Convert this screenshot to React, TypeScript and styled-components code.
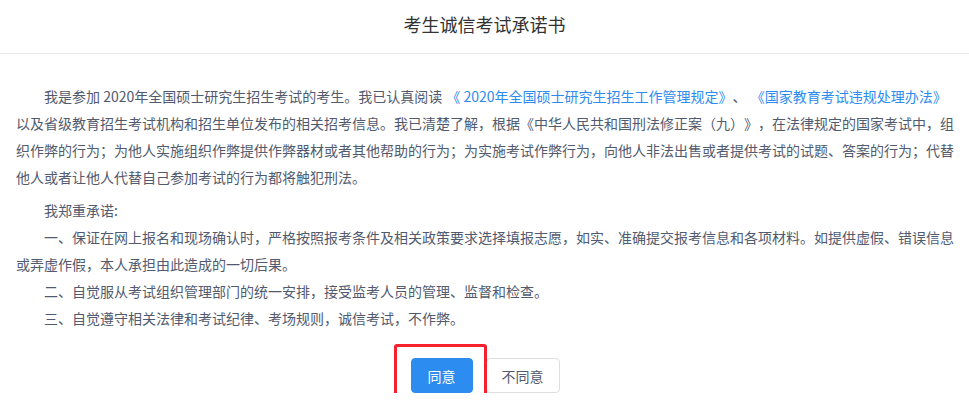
import * as React from "react";
import styled, { createGlobalStyle } from "styled-components";

const GlobalStyle = createGlobalStyle`
  html, body {
    margin: 0;
    padding: 0;
    background: #fff;
  }
  body {
    font-family: "Noto Sans CJK SC", "Liberation Sans", sans-serif;
    -webkit-font-smoothing: antialiased;
  }
`;

const Page = styled.div`
  width: 969px;
  background: #fff;
`;

const Header = styled.header`
  padding: 14px 0 19px;
  border-bottom: 1px solid #e8eaec;
  text-align: center;
`;

const Title = styled.h1`
  margin: 0;
  font-size: 18px;
  line-height: 20px;
  font-weight: 400;
  color: #333;
`;

const Body = styled.section`
  padding: 29px 15px 0 16px;
  font-size: 14px;
  line-height: 27px;
  color: #515a6e;
  text-spacing-trim: space-all;
`;

const Paragraph = styled.p<{ $gap?: number }>`
  margin: ${(p) => p.$gap ?? 0}px 0 0;
  text-indent: 2em;
`;

const Link = styled.a`
  margin-left: 1px;
  color: #2d8cf0;
  text-decoration: none;
  cursor: pointer;
`;

const Actions = styled.div`
  display: flex;
  justify-content: center;
  gap: 13px;
  margin-top: 26px;
`;

const Highlight = styled.div`
  position: relative;

  &::after {
    content: "";
    position: absolute;
    left: -17px;
    right: -14px;
    top: -14px;
    bottom: -12px;
    border: 3px solid #f5222d;
    border-radius: 3px;
    pointer-events: none;
  }
`;

const Button = styled.button<{ $primary?: boolean }>`
  height: 35px;
  padding: 0 ${(p) => (p.$primary ? 16 : 15)}px;
  font-family: inherit;
  font-size: 14px;
  border-radius: 4px;
  border: 1px solid ${(p) => (p.$primary ? "#2d8cf0" : "#dcdee2")};
  background: ${(p) => (p.$primary ? "#2d8cf0" : "#fff")};
  color: ${(p) => (p.$primary ? "#fff" : "#515a6e")};
  cursor: pointer;
`;

export default function App() {
  return (
    <Page>
      <GlobalStyle />
      <Header>
        <Title>考生诚信考试承诺书</Title>
      </Header>
      <Body>
        <Paragraph>
          我是参加 2020年全国硕士研究生招生考试的考生。我已认真阅读{" "}
          <Link>《 2020年全国硕士研究生招生工作管理规定》</Link>、{" "}
          <Link>《国家教育考试违规处理办法》</Link>
          以及省级教育招生考试机构和招生单位发布的相关招考信息。我已清楚了解，根据《中华人民共和国刑法修正案（九）》，在法律规定的国家考试中，组织作弊的行为；为他人实施组织作弊提供作弊器材或者其他帮助的行为；为实施考试作弊行为，向他人非法出售或者提供考试的试题、答案的行为；代替他人或者让他人代替自己参加考试的行为都将触犯刑法。
        </Paragraph>
        <Paragraph $gap={6}>我郑重承诺:</Paragraph>
        <Paragraph>
          一、保证在网上报名和现场确认时，严格按照报考条件及相关政策要求选择填报志愿，如实、准确提交报考信息和各项材料。如提供虚假、错误信息或弄虚作假，本人承担由此造成的一切后果。
        </Paragraph>
        <Paragraph>二、自觉服从考试组织管理部门的统一安排，接受监考人员的管理、监督和检查。</Paragraph>
        <Paragraph>三、自觉遵守相关法律和考试纪律、考场规则，诚信考试，不作弊。</Paragraph>
        <Actions>
          <Highlight>
            <Button $primary>同意</Button>
          </Highlight>
          <Button>不同意</Button>
        </Actions>
      </Body>
    </Page>
  );
}
